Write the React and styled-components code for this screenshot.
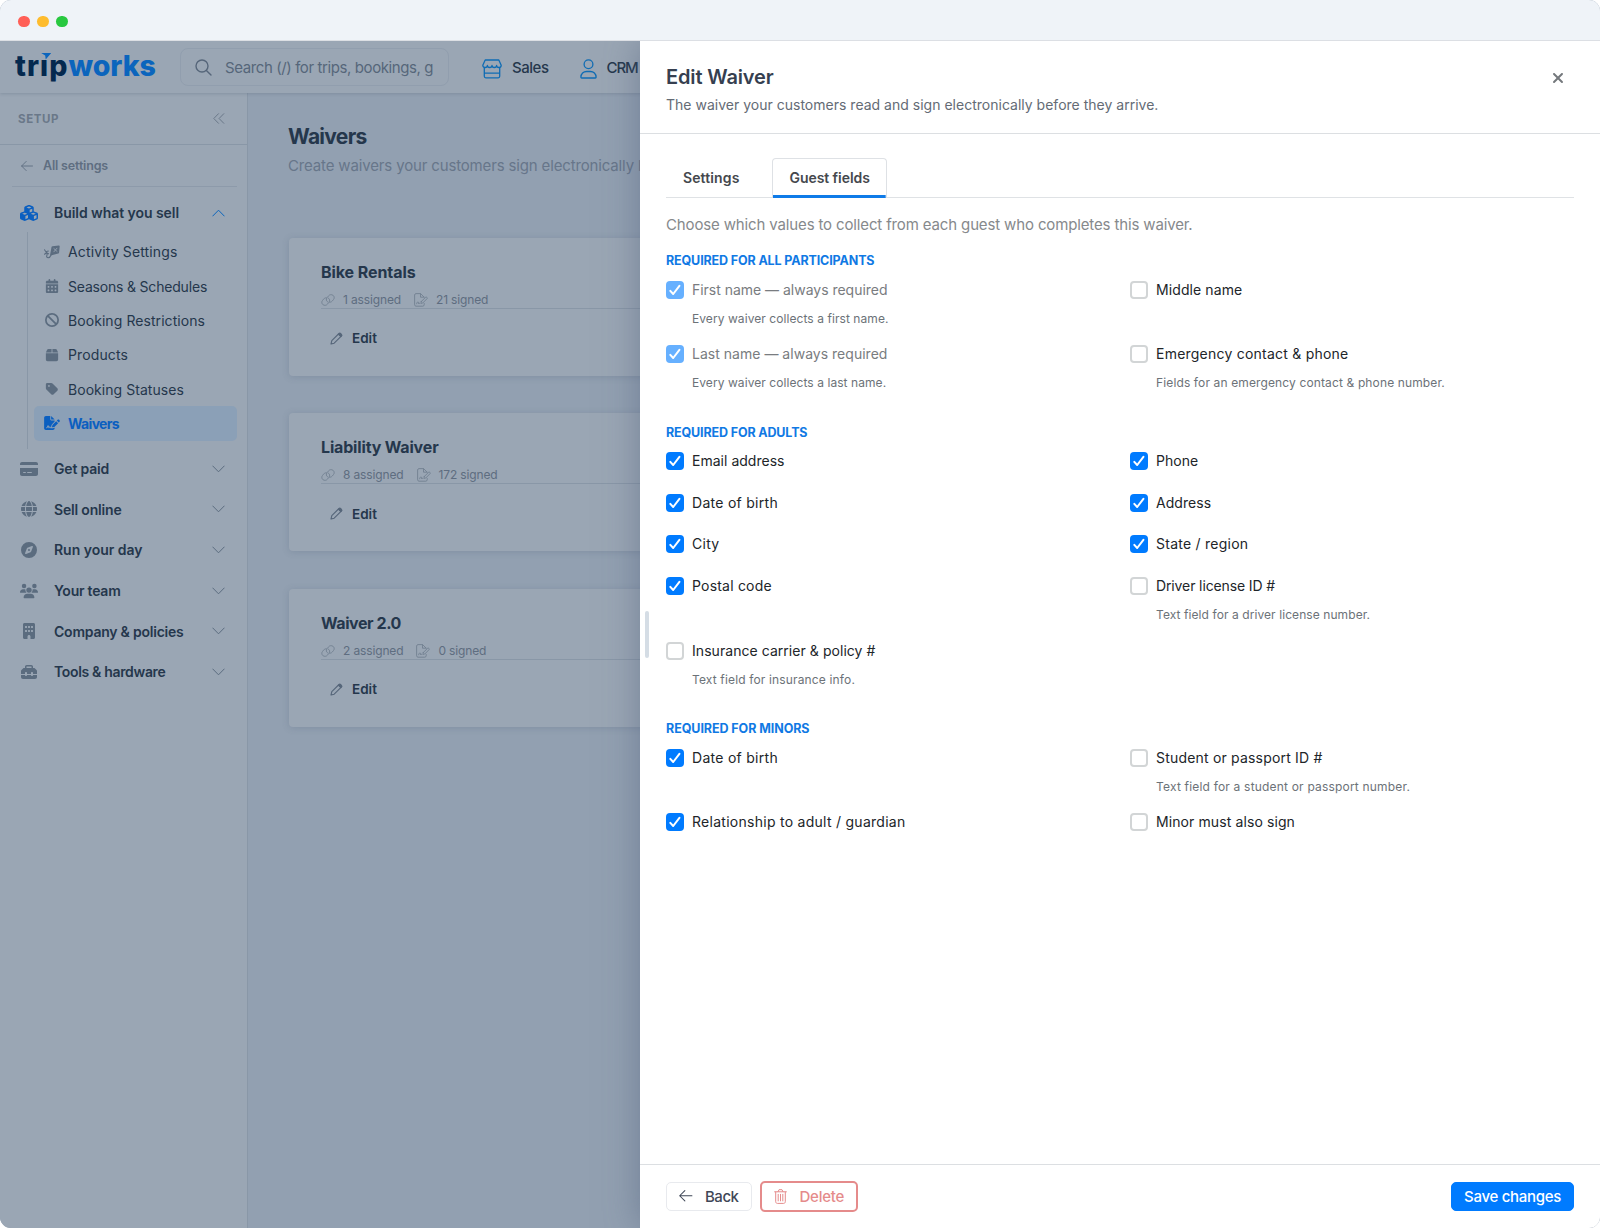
import React from 'react';
import styled, { createGlobalStyle, css } from 'styled-components';
import {
  FaCubes, FaCalendarDays, FaBan, FaBox, FaTag, FaFileSignature,
  FaCreditCard, FaGlobe, FaCompass, FaUsers, FaBuilding, FaToolbox, FaXmark,
} from 'react-icons/fa6';

const ink = '#25374c';
const muted = '#6a7889';
const blue = '#007bff';
const dimBlue = '#0b65bd';
const surface = '#9aa6b4';
const canvas = '#92a0b1';
const rule = '#8997a7';

const GlobalStyle = createGlobalStyle`
  * { box-sizing: border-box; }
  body { margin: 0; background: #fff; font-family: Inter, "Liberation Sans", sans-serif; }
  svg { display: block; flex: none; }
`;

/* ---------- window ---------- */
const Window = styled.div`
  width: 1600px;
  height: 1228px;
  display: flex;
  flex-direction: column;
  border-radius: 11px;
  overflow: hidden;
  background: ${canvas};
`;
const Chrome = styled.div`
  flex: none;
  height: 41px;
  display: flex;
  align-items: center;
  gap: 7.5px;
  padding: 3px 18px 0;
  background: #eff3f8;
  border-bottom: 1px solid #dcdfe4;
`;
const Light = styled.i`
  width: 11.5px;
  height: 11.5px;
  border-radius: 50%;
  background: ${(p) => p.$color};
`;
const Workspace = styled.div`
  position: relative;
  flex: 1;
  min-height: 0;
  display: flex;
  flex-direction: column;
  overflow: hidden;
`;
const Text = styled.span`
  white-space: pre;
  letter-spacing: ${(p) => p.$track || 0}px;
`;

/* ---------- top bar ---------- */
const TopBar = styled.header`
  flex: none;
  height: 52px;
  display: flex;
  align-items: center;
  padding-left: 15px;
  background: ${surface};
  box-shadow: 0 1px 3px rgba(60, 78, 100, 0.22);
  position: relative;
  z-index: 1;
`;
const Logo = styled.div`
  position: relative;
  width: 165px;
  margin-top: -2px;
  display: flex;
  font-size: 28.5px;
  line-height: 36px;
  font-weight: 800;
  color: ${dimBlue};
  svg { position: absolute; left: 24px; top: 3px; }
`;
const LogoDark = styled(Text)`
  width: 53.5px;
  color: #04294f;
`;
const Search = styled.div`
  width: 269px;
  height: 38px;
  display: flex;
  align-items: center;
  gap: 13px;
  padding: 0 15px 0 14px;
  border: 1px solid #919eae;
  border-radius: 8px;
  font-size: 15px;
  color: #56667a;
`;
const TopLink = styled.div`
  display: flex;
  align-items: center;
  gap: ${(p) => p.$gap}px;
  margin-left: ${(p) => p.$left}px;
  font-size: 15px;
  font-weight: 500;
  color: ${ink};
  svg { color: #0f6cb4; margin-top: 4px; }
`;

/* ---------- sidebar ---------- */
const Body = styled.div`
  flex: 1;
  min-height: 0;
  display: flex;
`;
const Sidebar = styled.nav`
  flex: none;
  width: 248px;
  display: flex;
  flex-direction: column;
  background: ${surface};
  border-right: 1px solid ${rule};
`;
const SetupHead = styled.div`
  height: 52px;
  display: flex;
  align-items: center;
  justify-content: space-between;
  padding: 0 22px 0 18px;
  border-bottom: 1px solid ${rule};
  font-size: 11.5px;
  font-weight: 700;
  color: ${muted};
`;
const AllSettings = styled.div`
  height: 42px;
  margin: 0 10px 0 12px;
  padding-left: 9px;
  display: flex;
  align-items: center;
  gap: 10px;
  border-bottom: 1px solid #8d9aaa;
  font-size: 12.5px;
  font-weight: 600;
  color: #5f6e81;
`;
const Group = styled.div`
  height: 40.55px;
  display: flex;
  align-items: center;
  padding: 0 22px 0 20px;
  font-size: 14px;
  font-weight: 600;
  color: ${ink};
`;
const FirstGroup = styled(Group)`
  margin-top: 5.5px;
`;
const GroupIcon = styled.span`
  width: 34px;
  font-size: 16px;
  color: ${(p) => (p.$active ? '#0b5fc0' : '#5b6c7f')};
  svg { width: 18px; }
`;
const GroupMark = styled.span`
  margin-left: auto;
  color: ${(p) => (p.$active ? dimBlue : '#5b6c7f')};
`;
const SubList = styled.div`
  margin: -1px 0 0 27px;
  padding: 2.5px 10px 8px 6px;
  border-left: 1px solid ${rule};
`;
const SubItem = styled.div`
  height: 34.35px;
  display: flex;
  align-items: center;
  gap: 8px;
  padding-left: 10px;
  border-radius: 5px;
  font-size: 14px;
  color: ${ink};
  svg { width: 16px; height: 14px; color: #5b6c7f; }
  ${(p) => p.$active && css`
    background: #8ba0b7;
    color: #0b5fc0;
    font-weight: 700;
    svg { color: #0b5fc0; }
  `}
`;

/* ---------- page ---------- */
const Main = styled.main`
  flex: 1;
  padding: 30px 40px 0;
  overflow: hidden;
`;
const PageTitle = styled.h1`
  margin: 0;
  font-size: 21px;
  line-height: 28px;
  font-weight: 700;
  color: ${ink};
`;
const PageLead = styled.p`
  margin: 0.5px 0 58px;
  font-size: 15px;
  line-height: 28px;
  color: #67768a;
`;
const Cards = styled.div`
  display: flex;
  flex-direction: column;
  gap: 37.5px;
  padding-left: 1px;
`;
const Card = styled.article`
  width: 1200px;
  height: 138px;
  padding: 23px 32px;
  border-radius: 4px;
  background: ${surface};
  box-shadow: 0 1px 7px rgba(70, 88, 112, 0.22);
`;
const CardTitle = styled.h2`
  margin: 0;
  font-size: 16px;
  line-height: 22px;
  font-weight: 700;
  color: ${ink};
`;
const Meta = styled.div`
  height: 26px;
  padding-top: 9px;
  display: flex;
  align-items: center;
  border-bottom: 1px solid ${rule};
  font-size: 12px;
  line-height: 16px;
  color: #5e6d80;
  svg { color: #728091; margin-right: 8px; }
`;
const MetaText = styled(Text)`
  margin-right: 13px;
`;
const EditLink = styled.div`
  margin: 18.5px 0 0 9px;
  display: flex;
  align-items: center;
  gap: 9px;
  font-size: 13.5px;
  line-height: 22px;
  font-weight: 600;
  color: ${ink};
  svg { color: #56667a; }
`;

/* ---------- drawer ---------- */
const Drawer = styled.aside`
  position: absolute;
  inset: 0 0 0 640px;
  z-index: 2;
  display: flex;
  flex-direction: column;
  background: #fff;
  box-shadow: 0 0 34px rgba(76, 92, 122, 0.5);
`;
const Handle = styled.i`
  position: absolute;
  left: 5px;
  top: 570px;
  width: 4px;
  height: 47px;
  border-radius: 2px;
  background: #d5dde5;
`;
const DrawerHead = styled.div`
  height: 93px;
  display: flex;
  justify-content: space-between;
  padding: 22px 34px 0 26px;
  border-bottom: 1px solid #dcdfe2;
`;
const DrawerTitle = styled.h2`
  margin: 0;
  font-size: 20px;
  line-height: 28px;
  font-weight: 600;
  color: #363f50;
`;
const DrawerLead = styled.p`
  margin: 4px 0 0;
  font-size: 14px;
  line-height: 20px;
  color: #646b75;
`;
const Close = styled.button`
  border: 0;
  padding: 7px 0 0;
  background: none;
  align-self: flex-start;
  color: #74787c;
`;
const DrawerBody = styled.div`
  flex: 1;
  padding: 24px 26px 0;
`;
const Tabs = styled.div`
  display: flex;
  gap: 16px;
  border-bottom: 1px solid #dfe2e5;
`;
const Tab = styled.div`
  height: 40px;
  margin-bottom: -1px;
  padding: 0 16px;
  line-height: 38px;
  font-size: 14px;
  font-weight: 600;
  color: #45484d;
  border: 1px solid transparent;
  ${(p) => p.$active && css`
    border-color: #dee1e5;
    border-bottom: 0;
    border-radius: 4px 4px 0 0;
    background: linear-gradient(#0f7be8, #0f7be8) bottom / 100% 3px no-repeat;
  `}
`;
const Hint = styled.p`
  margin: 15px 0 14px;
  font-size: 15px;
  line-height: 24px;
  color: #86898c;
`;
const Section = styled.section`
  margin-bottom: 18.3px;
`;
const SectionTitle = styled.h3`
  margin: 0 0 4.5px;
  font-size: 12.5px;
  line-height: 20px;
  font-weight: 700;
  color: #1079e4;
`;
const Fields = styled.div`
  display: grid;
  grid-template-columns: 1fr 1fr;
  column-gap: 20px;
  grid-auto-rows: minmax(41.7px, auto);
`;
const Field = styled.div`
  grid-column: ${(p) => (p.$wide ? '1 / -1' : 'auto')};
`;
const FieldLabel = styled.label`
  height: 28px;
  display: flex;
  align-items: center;
  gap: 8px;
  font-size: 14px;
  line-height: 18px;
  color: ${(p) => (p.$disabled ? '#797c80' : '#212529')};
`;
const Box = styled.span`
  width: 18px;
  height: 18px;
  display: grid;
  place-items: center;
  border-radius: 4px;
  border: ${(p) => (p.$on ? 0 : '2px solid #d2d5d6')};
  background: ${(p) => (p.$on ? (p.$disabled ? '#66b0ff' : blue) : '#fff')};
`;
const Help = styled.p`
  margin: 6px 0 0 26px;
  padding-bottom: 12.4px;
  font-size: 12px;
  line-height: 18px;
  color: #6c7278;
`;
const Footer = styled.div`
  height: 64px;
  display: flex;
  align-items: center;
  gap: 8px;
  padding: 0 26px 1px;
  border-top: 1px solid #dcdfe2;
`;
const Button = styled.button`
  height: 29px;
  display: flex;
  align-items: center;
  gap: ${(p) => p.$gap || 0}px;
  padding: 0 12px;
  border: 1px solid #e8eaee;
  border-radius: 5px;
  background: #fff;
  font: 500 15px Inter, sans-serif;
  color: #3f4757;
  ${(p) => p.$kind === 'danger' && css`
    height: 31px;
    border: 2px solid #e58b8b;
    color: #e58b8b;
    padding: 0 12px;
  `}
  ${(p) => p.$kind === 'primary' && css`
    margin-left: auto;
    border-color: ${blue};
    background: ${blue};
    color: #fff;
  `}
`;

/* ---------- line icons ---------- */
const Line = ({ w, h, box, sw = 1, children }) => (
  <svg width={w} height={h} viewBox={box || `0 0 ${w} ${h}`} fill="none" stroke="currentColor"
    strokeWidth={sw} strokeLinecap="round" strokeLinejoin="round">{children}</svg>
);
const SearchIcon = () => (
  <Line w={17} h={17} sw={1.4}><circle cx="7" cy="7" r="6" /><path d="M11.4 11.4 16 16" /></Line>
);
const StoreIcon = () => (
  <Line w={20} h={20} sw={1.3}>
    <path d="M3.2 1h13.6l2.4 5.200c0 1.500-1.100 2.300-2.300 2.300S14.600 7.700 14.600 6.500c0 1.200-1.100 2-2.300 2S10 7.700 10 6.500c0 1.200-1.100 2-2.300 2s-2.300-.8-2.300-2c0 1.200-1.100 2-2.300 2S.8 7.700.8 6.200L3.200 1z" />
    <path d="M2.300 9v8.300c0 1 .6 1.500 1.500 1.500h12.400c.9 0 1.500-.5 1.500-1.500V9M2.300 14.200h15.400" />
  </Line>
);
const PersonIcon = () => (
  <Line w={17} h={20} sw={1.3}>
    <circle cx="8.500" cy="5.300" r="4.400" />
    <path d="M1.700 19h13.600c.5 0 .8-.3.8-.8 0-3.400-2.600-5.700-5.700-5.700H6.600C3.500 12.500.9 14.800.9 18.200c0 .5.3.8.8.8z" />
  </Line>
);
const CollapseIcon = () => <Line w={12} h={11}><path d="M5.500.7.8 5.500l4.700 4.800M10.800.7 6.100 5.500l4.700 4.800" /></Line>;
const ArrowLeft = ({ w = 12, sw = 0.9 }) => (
  <Line w={w} h={w} box="0 0 12 12" sw={sw}><path d="M11.500 6H.6M5.200 1.400.6 6l4.600 4.600" /></Line>
);
const Chevron = ({ up }) => <Line w={13} h={8}><path d={up ? 'M.8 7 6.500 1.200 12.200 7' : 'M.8 1 6.500 6.800 12.200 1'} /></Line>;
const KiteIcon = () => (
  <svg width="17" height="14" viewBox="0 0 17 14">
    <path d="M9 .8 15.700.1c.6-.1 1 .4 1 .9l-.7 6.700c-.1.500-.4.800-.8.900L7 10.700 6.500 10 8 1.700c.1-.5.500-.9 1-.9z" fill="currentColor" />
    <path d="m10.200 3.100 4 3.600m-.2-4-3.800 4.400" stroke={surface} strokeWidth=".9" />
    <path d="M7.500 10.200c-.6 1.600-1.700 2.900-3.100 2.900-1.500 0-1.800-1.200-1.400-2.300.5-1.400.5-2.900-.6-3.900M.5 4.600l1.500 2.100L4.600 6M.6 9.400l2-1.600 2.200 1.100" fill="none" stroke="currentColor" strokeWidth="1.200" strokeLinecap="round" />
  </svg>
);
const LinkIcon = () => (
  <Line w={14} h={12} sw={0.9}>
    <path d="M6.600 7.900c-1.500-.8-1.700-2.700-.6-4.100l1.500-1.900C8.600.5 10.500.3 11.900 1.200c1.500 1.100 1.700 2.900.6 4.300L11.300 7c-.7.9-1.700 1.300-2.700 1.200" />
    <path d="M7.400 4.100c1.500.8 1.700 2.700.6 4.100l-1.500 1.900c-1.100 1.400-3 1.600-4.400.7C.6 9.700.4 7.900 1.500 6.500L2.700 5c.7-.9 1.700-1.300 2.700-1.200" />
  </Line>
);
const SignedIcon = () => (
  <Line w={14} h={14} sw={0.9}>
    <path d="M10.200 10.500v1.300c0 .8-.6 1.400-1.400 1.400H2c-.8 0-1.400-.6-1.400-1.400V2C.6 1.200 1.200.6 2 .6h4.600l3.500 3.500M6.500.8v3.400H10" />
    <path d="m7.300 8.500 4.500-4.400c.5-.5 1.900.8 1.400 1.400L8.800 10l-1.900.4.4-1.900zM2.600 10.800c.9-2.700 1.900-2.700 2 0 .5-.9.900-.9 1.300-.2" />
  </Line>
);
const PencilIcon = () => (
  <Line w={13} h={13} sw={1.1}>
    <path d="m1 12 .8-3.300L9 1.500c1.100-1.100 3.500 1.300 2.500 2.400L4.200 11.200 1 12z" />
    <path d="m8.300 2.200 2.500 2.500.9-1.300-1.700-1.800z" fill="currentColor" />
  </Line>
);
const TrashIcon = () => (
  <Line w={13} h={15} sw={1}>
    <path d="M.6 2.800h11.800M4 2.700 5 .7h3l1 2M1.700 3v9.700c0 1 .7 1.700 1.700 1.700h6.200c1 0 1.700-.7 1.700-1.700V3M4.200 5.300v6.600M6.500 5.300v6.600M8.800 5.300v6.600" />
  </Line>
);
const Tick = () => (
  <svg width="12" height="12" viewBox="0 0 12 12" fill="none" stroke="#fff" strokeWidth="2" strokeLinecap="round" strokeLinejoin="round">
    <path d="M1.300 6.900 4.200 10l6.200-8.200" />
  </svg>
);

/* ---------- data ---------- */
const subItems = [
  ['Activity Settings', 0.14, KiteIcon],
  ['Seasons & Schedules', -0.19, FaCalendarDays],
  ['Booking Restrictions', 0.07, FaBan],
  ['Products', 0.12, FaBox],
  ['Booking Statuses', 0.05, FaTag],
  ['Waivers', -0.67, FaFileSignature, true],
];
const groups = [
  ['Get paid', -0.19, FaCreditCard],
  ['Sell online', -0.18, FaGlobe],
  ['Run your day', -0.02, FaCompass],
  ['Your team', -0.24, FaUsers],
  ['Company & policies', -0.23, FaBuilding],
  ['Tools & hardware', -0.33, FaToolbox],
];
const cards = [
  ['Bike Rentals', -0.08, '1 assigned', '21 signed'],
  ['Liability Waiver', -0.16, '8 assigned', '172 signed'],
  ['Waiver 2.0', -0.42, '2 assigned', '0 signed'],
];
const sections = [
  { title: 'REQUIRED FOR ALL PARTICIPANTS', track: -0.13, fields: [
    { label: 'First name — always required', track: -0.02, on: true, disabled: true, help: 'Every waiver collects a first name.', ht: 0.07 },
    { label: 'Middle name', track: 0.1 },
    { label: 'Last name — always required', track: 0.02, on: true, disabled: true, help: 'Every waiver collects a last name.', ht: 0.07 },
    { label: 'Emergency contact & phone', track: 0.23, help: 'Fields for an emergency contact & phone number.', ht: 0.13 },
  ] },
  { title: 'REQUIRED FOR ADULTS', track: -0.14, fields: [
    { label: 'Email address', track: 0.02, on: true },
    { label: 'Phone', track: 0.05, on: true },
    { label: 'Date of birth', track: 0.28, on: true },
    { label: 'Address', track: 0.05, on: true },
    { label: 'City', track: 0.3, on: true },
    { label: 'State / region', track: 0.25, on: true },
    { label: 'Postal code', track: 0.2, on: true },
    { label: 'Driver license ID #', track: -0.12, help: 'Text field for a driver license number.', ht: 0.08 },
    { label: 'Insurance carrier & policy #', track: 0.05, help: 'Text field for insurance info.', ht: 0.15, wide: true },
  ] },
  { title: 'REQUIRED FOR MINORS', track: -0.07, fields: [
    { label: 'Date of birth', track: 0.28, on: true },
    { label: 'Student or passport ID #', track: 0.19, help: 'Text field for a student or passport number.', ht: 0.19 },
    { label: 'Relationship to adult / guardian', track: 0.27, on: true },
    { label: 'Minor must also sign', track: 0.1 },
  ] },
];

export default function App() {
  return (
    <>
      <GlobalStyle />
      <Window>
        <Chrome>
          <Light $color="#ff5f57" /><Light $color="#febc2e" /><Light $color="#28c840" />
        </Chrome>
        <Workspace>
          <TopBar>
            <Logo>
              <LogoDark $track={1.05}>trip</LogoDark>
              <Text $track={-0.05}>works</Text>
              <svg width="14" height="9" viewBox="0 0 14 9">
                <path d="M0 0h14v8.600H0z" fill={surface} />
                <path d="M2.200 2h10L6.700 8.400 6.200 4.600z" fill={dimBlue} />
              </svg>
            </Logo>
            <Search><SearchIcon /><Text $track={-0.4}>Search (/) for trips, bookings, g</Text></Search>
            <TopLink $left={33} $gap={10}><StoreIcon /><Text $track={-0.48}>Sales</Text></TopLink>
            <TopLink $left={32} $gap={9}><PersonIcon /><Text $track={-1.1}>CRM</Text></TopLink>
          </TopBar>
          <Body>
            <Sidebar>
              <SetupHead><Text $track={0.6}>SETUP</Text><CollapseIcon /></SetupHead>
              <AllSettings><ArrowLeft /><Text $track={-0.17}>All settings</Text></AllSettings>
              <FirstGroup>
                <GroupIcon $active><FaCubes /></GroupIcon>
                <Text $track={-0.06}>Build what you sell</Text>
                <GroupMark $active><Chevron up /></GroupMark>
              </FirstGroup>
              <SubList>
                {subItems.map(([name, track, Icon, active]) => (
                  <SubItem key={name} $active={active}><Icon /><Text $track={track}>{name}</Text></SubItem>
                ))}
              </SubList>
              {groups.map(([name, track, Icon]) => (
                <Group key={name}>
                  <GroupIcon><Icon /></GroupIcon>
                  <Text $track={track}>{name}</Text>
                  <GroupMark><Chevron /></GroupMark>
                </Group>
              ))}
            </Sidebar>
            <Main>
              <PageTitle><Text $track={-0.7}>Waivers</Text></PageTitle>
              <PageLead><Text $track={-0.15}>Create waivers your customers sign electronically b</Text></PageLead>
              <Cards>
                {cards.map(([name, track, assigned, signed]) => (
                  <Card key={name}>
                    <CardTitle><Text $track={track}>{name}</Text></CardTitle>
                    <Meta>
                      <LinkIcon /><MetaText $track={-0.14}>{assigned}</MetaText>
                      <SignedIcon /><Text $track={-0.14}>{signed}</Text>
                    </Meta>
                    <EditLink><PencilIcon />Edit</EditLink>
                  </Card>
                ))}
              </Cards>
            </Main>
          </Body>
          <Drawer>
            <Handle />
            <DrawerHead>
              <div>
                <DrawerTitle><Text $track={-0.14}>Edit Waiver</Text></DrawerTitle>
                <DrawerLead><Text $track={0.01}>The waiver your customers read and sign electronically before they arrive.</Text></DrawerLead>
              </div>
              <Close aria-label="Close"><FaXmark size={16} /></Close>
            </DrawerHead>
            <DrawerBody>
              <Tabs>
                <Tab><Text $track={0.12}>Settings</Text></Tab>
                <Tab $active><Text $track={-0.06}>Guest fields</Text></Tab>
              </Tabs>
              <Hint><Text $track={-0.14}>Choose which values to collect from each guest who completes this waiver.</Text></Hint>
              {sections.map((s) => (
                <Section key={s.title}>
                  <SectionTitle><Text $track={s.track}>{s.title}</Text></SectionTitle>
                  <Fields>
                    {s.fields.map((f) => (
                      <Field key={f.label} $wide={f.wide}>
                        <FieldLabel $disabled={f.disabled}>
                          <Box $on={f.on} $disabled={f.disabled}>{f.on && <Tick />}</Box>
                          <Text $track={f.track}>{f.label}</Text>
                        </FieldLabel>
                        {f.help && <Help><Text $track={f.ht}>{f.help}</Text></Help>}
                      </Field>
                    ))}
                  </Fields>
                </Section>
              ))}
            </DrawerBody>
            <Footer>
              <Button $gap={12.5}><ArrowLeft w={13.5} sw={0.9} /><Text $track={-0.48}>Back</Text></Button>
              <Button $kind="danger" $gap={13}><TrashIcon /><Text $track={-0.25}>Delete</Text></Button>
              <Button $kind="primary"><Text $track={-0.3}>Save changes</Text></Button>
            </Footer>
          </Drawer>
        </Workspace>
      </Window>
    </>
  );
}
